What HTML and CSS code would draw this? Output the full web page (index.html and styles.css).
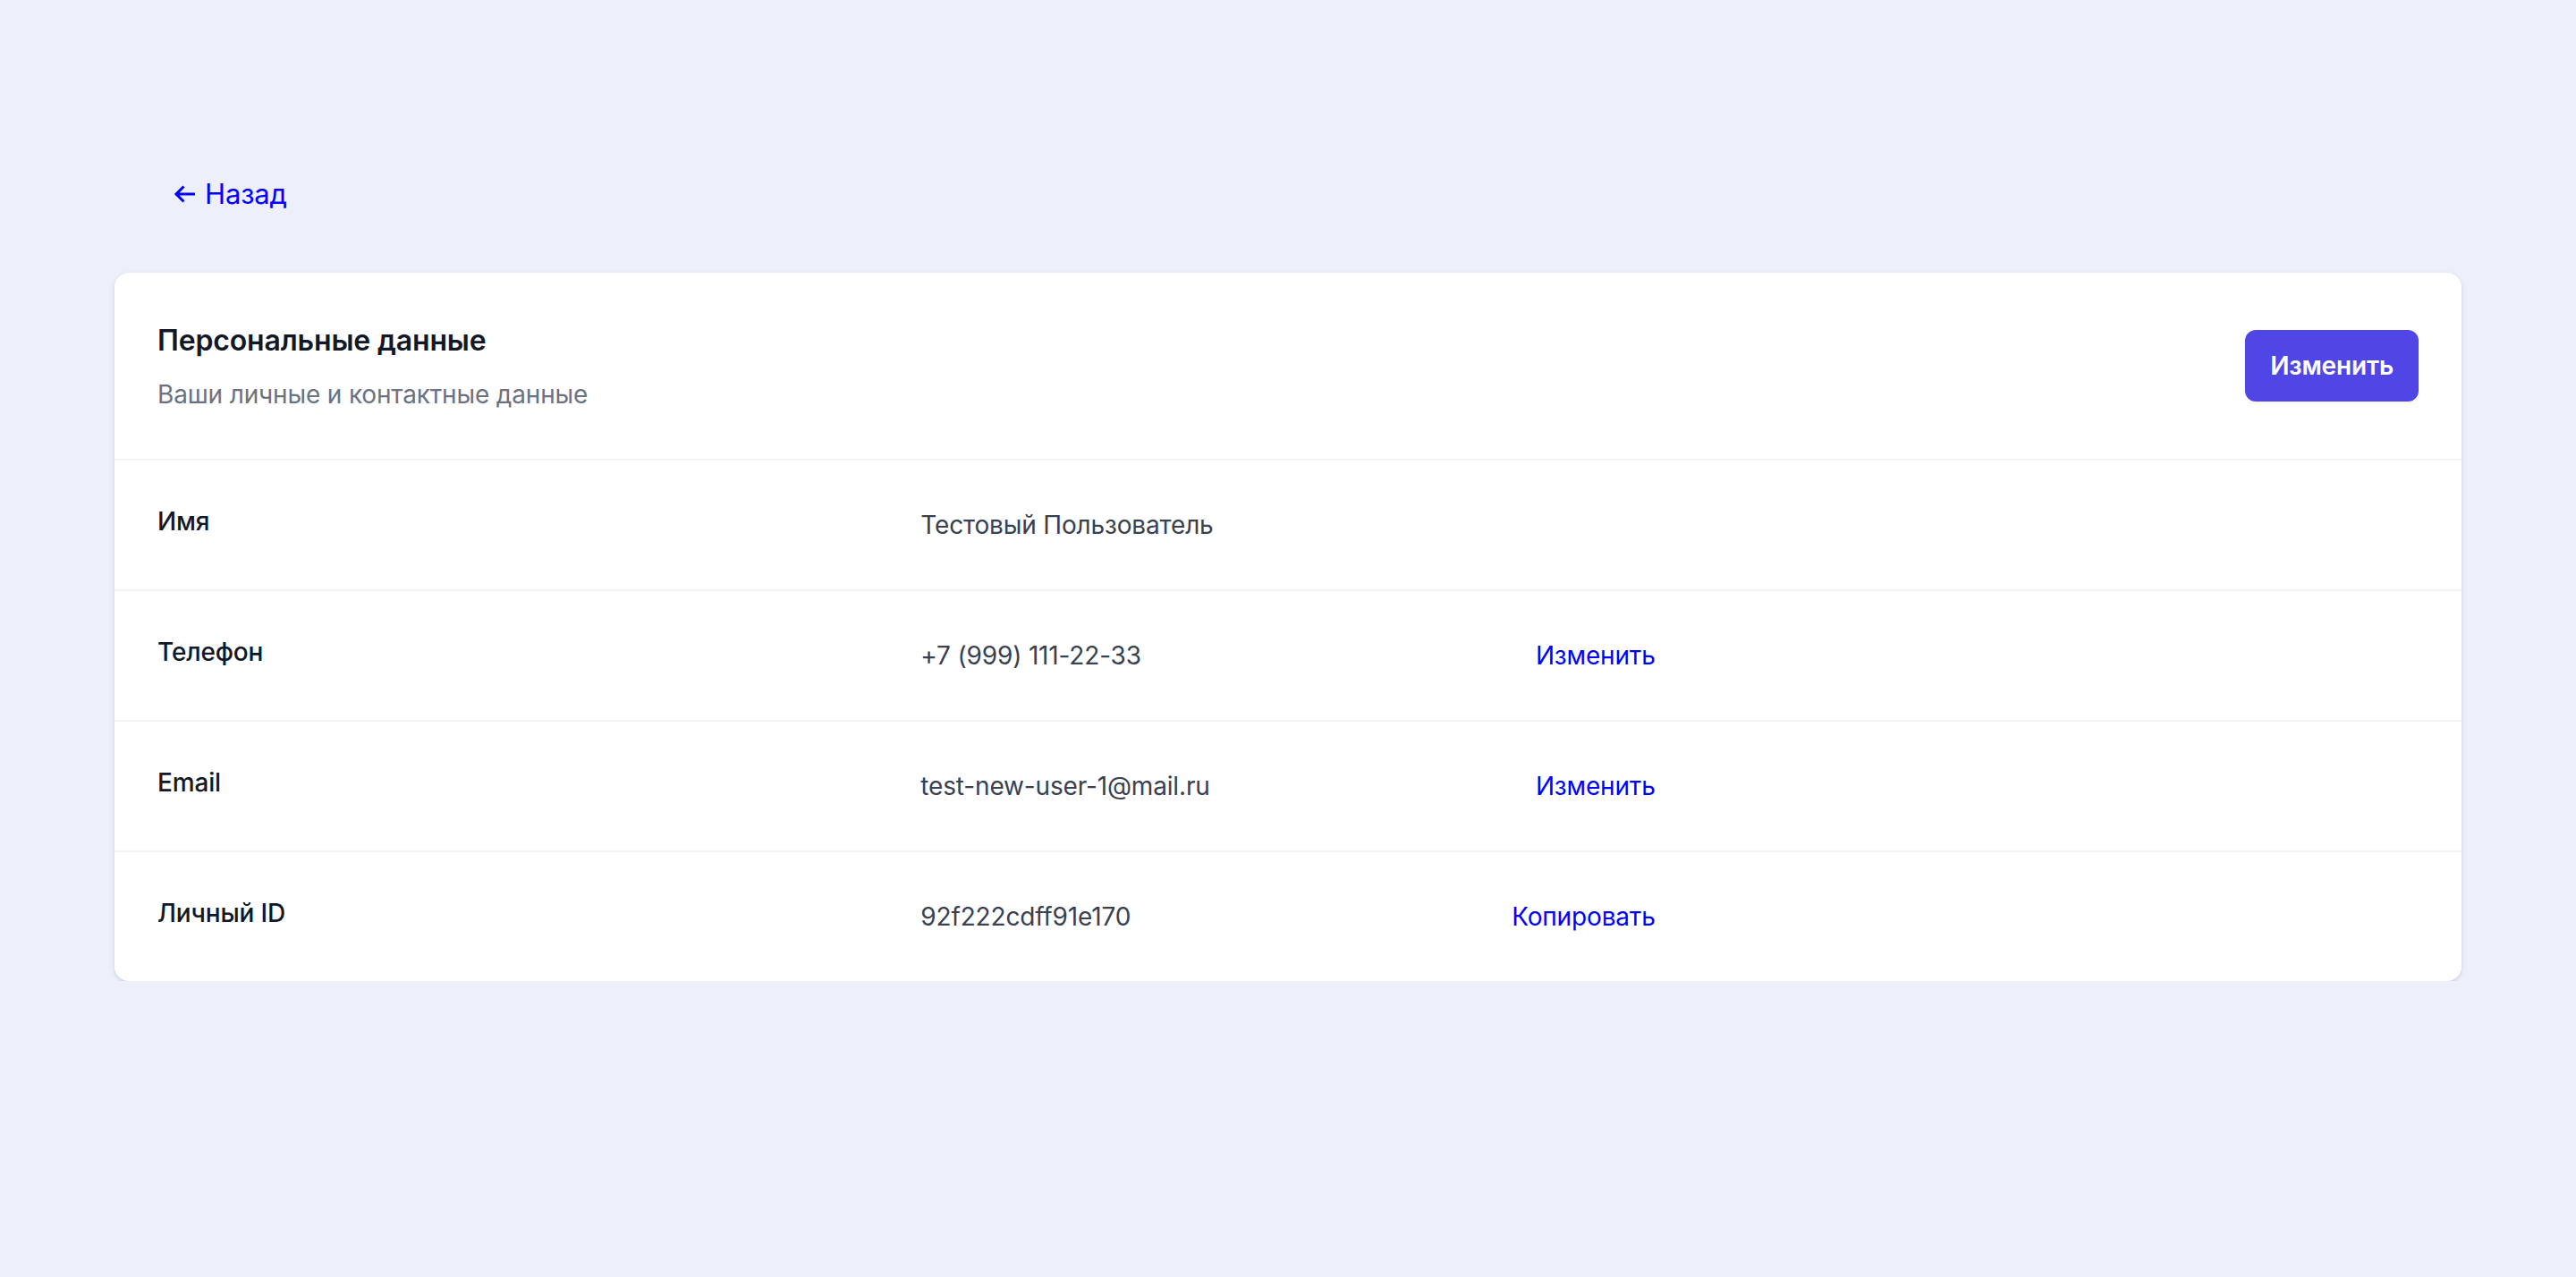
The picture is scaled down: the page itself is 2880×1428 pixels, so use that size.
FILE: index.html
```html
<!DOCTYPE html>
<html lang="ru">
<head>
    <meta charset="UTF-8">
    <meta name="viewport" content="width=device-width, initial-scale=1.0">
    <title>Персональные данные</title>
    <link rel="stylesheet" href="styles.css">
</head>
<body>
    <main class="page">
        <div class="nav">
            <a class="back" href="#">
                <svg class="back-icon" width="24" height="20" viewBox="0 0 24 20" fill="none">
                    <path d="M24 10H3M11.5 1.5L3 10l8.5 8.5" stroke="currentColor" stroke-width="3"/>
                </svg>
                Назад
            </a>
        </div>

        <section class="card">
            <div class="card-head">
                <div>
                    <h2 class="card-title">Персональные данные</h2>
                    <p class="card-sub">Ваши личные и контактные данные</p>
                </div>
                <button class="btn" type="button">Изменить</button>
            </div>

            <dl class="fields">
                <div class="field">
                    <dt>Имя</dt>
                    <dd><span>Тестовый Пользователь</span></dd>
                </div>
                <div class="field">
                    <dt>Телефон</dt>
                    <dd><span>+7 (999) 111-22-33</span><a class="action" href="#">Изменить</a></dd>
                </div>
                <div class="field">
                    <dt>Email</dt>
                    <dd><span>test-new-user-1@mail.ru</span><a class="action" href="#">Изменить</a></dd>
                </div>
                <div class="field">
                    <dt>Личный ID</dt>
                    <dd><span>92f222cdff91e170</span><a class="action" href="#">Копировать</a></dd>
                </div>
            </dl>
        </section>
    </main>
</body>
</html>
```

FILE: styles.css
```css
body{
    margin: 0;
    background-color: #edeffb;
    font-family: Inter, "Noto Sans", sans-serif;
    letter-spacing: -0.01em;
}
.page{
    padding: 193px 128px 0;
}
.nav{
    margin-bottom: 64px;
    padding-left: 66px;
}
.back{
    display: inline-flex;
    align-items: center;
    gap: 11px;
    color: #0000ff;
    font-size: 31px;
    line-height: 48px;
    text-decoration: none;
}

/* карточка */
.card{
    background-color: #fff;
    border-radius: 16px;
    box-shadow: 0 2px 6px rgba(0, 0, 0, 0.1), 0 2px 4px -2px rgba(0, 0, 0, 0.1);
    overflow: hidden;
}
.card-head{
    display: flex;
    justify-content: space-between;
    align-items: center;
    padding: 48px;
    border-bottom: 2px solid #f3f4f6;
}
.card-title{
    margin: 0;
    font-size: 32px;
    line-height: 56px;
    font-weight: 600;
    color: #111827;
}
.card-sub{
    margin: 8px 0 0;
    font-size: 28px;
    line-height: 48px;
    color: #6b7280;
}
.btn{
    height: 80px;
    padding: 0 28px;
    border: 0;
    border-radius: 12px;
    background-color: #4f46e5;
    color: #fff;
    font-family: inherit;
    font-size: 28px;
    font-weight: 600;
    letter-spacing: inherit;
    box-shadow: 0 2px 4px rgba(0, 0, 0, 0.05);
}

/* строки */
.fields{
    margin: 0;
}
.field{
    display: grid;
    grid-template-columns: repeat(3, 1fr);
    gap: 32px;
    padding: 48px;
}
.field + .field{
    border-top: 2px solid #f3f4f6;
}
.field dt{
    font-size: 28px;
    line-height: 40px;
    font-weight: 500;
    color: #111827;
}
.field dd{
    display: flex;
    justify-content: space-between;
    margin: 0;
    font-size: 28px;
    line-height: 48px;
    color: #374151;
}
.action{
    color: #0000ff;
    text-decoration: none;
}
```
